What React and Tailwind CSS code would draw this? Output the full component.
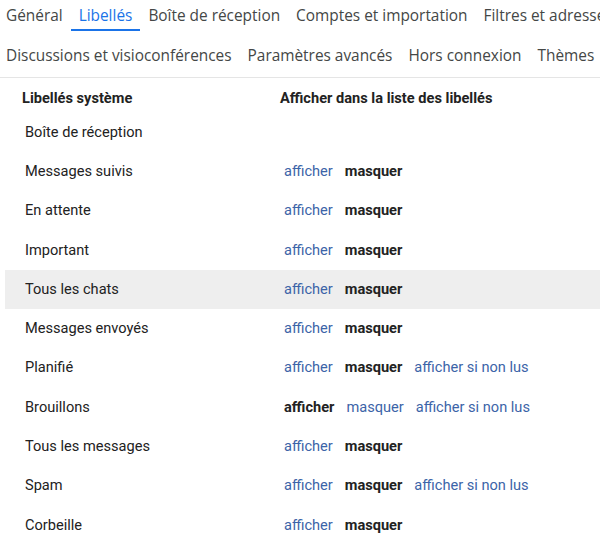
import React from "react";

const tabsTop = ["Général", "Libellés", "Boîte de réception", "Comptes et importation", "Filtres et adresses bloquées"];
const tabsBottom = ["Discussions et visioconférences", "Paramètres avancés", "Hors connexion", "Thèmes"];

// each row: label + list of actions; bold = the selected one
const rows = [
  { label: "Boîte de réception", actions: [] },
  { label: "Messages suivis", actions: ["afficher", "masquer"], active: 1 },
  { label: "En attente", actions: ["afficher", "masquer"], active: 1 },
  { label: "Important", actions: ["afficher", "masquer"], active: 1 },
  { label: "Tous les chats", actions: ["afficher", "masquer"], active: 1, hover: true },
  { label: "Messages envoyés", actions: ["afficher", "masquer"], active: 1 },
  { label: "Planifié", actions: ["afficher", "masquer", "afficher si non lus"], active: 1 },
  { label: "Brouillons", actions: ["afficher", "masquer", "afficher si non lus"], active: 0 },
  { label: "Tous les messages", actions: ["afficher", "masquer"], active: 1 },
  { label: "Spam", actions: ["afficher", "masquer", "afficher si non lus"], active: 1 },
  { label: "Corbeille", actions: ["afficher", "masquer"], active: 1 },
];

function Tab({ label, selected }) {
  return (
    <div
      className={`relative px-2 h-full flex items-center whitespace-nowrap ${
        selected ? "text-[#1a73e8]" : "text-[#444746]"
      }`}
    >
      {label}
      {selected && <div className="absolute left-0 right-0 bottom-0 h-[2px] bg-[#1a73e8]" />}
    </div>
  );
}

export default function App() {
  return (
    <div className="w-[600px] h-[541px] overflow-hidden bg-white">
      {/* settings tabs */}
      <div className="border-b border-[#e5e5e5] font-['Open_Sans',sans-serif] text-[15.4px]">
        <div className="flex h-[35px] pb-[4px] -ml-[2px]">
          {tabsTop.map((t) => (
            <Tab key={t} label={t} selected={t === "Libellés"} />
          ))}
        </div>
        <div className="flex h-[42px] -ml-[2px]">
          {tabsBottom.map((t) => (
            <Tab key={t} label={t} />
          ))}
        </div>
      </div>

      {/* system labels table */}
      <div className="ml-[5px] font-['Roboto',sans-serif] text-[14.6px] text-[#222]">
        <div className="flex h-[35px] pt-[7px] items-center font-bold">
          <div className="w-[275px] pl-[17px]">Libellés système</div>
          <div>Afficher dans la liste des libellés</div>
        </div>
        {rows.map((r) => (
          <div
            key={r.label}
            className={`flex h-[39.3px] items-center ${r.hover ? "bg-[#eeeeee]" : ""}`}
          >
            <div className="w-[279px] pl-[20px]">{r.label}</div>
            <div className="flex gap-[12px]">
              {r.actions.map((a, i) =>
                i === r.active ? (
                  <span key={a} className="font-bold text-[#222]">
                    {a}
                  </span>
                ) : (
                  <span key={a} className="text-[#3c64a8] cursor-pointer">
                    {a}
                  </span>
                )
              )}
            </div>
          </div>
        ))}
      </div>
    </div>
  );
}
